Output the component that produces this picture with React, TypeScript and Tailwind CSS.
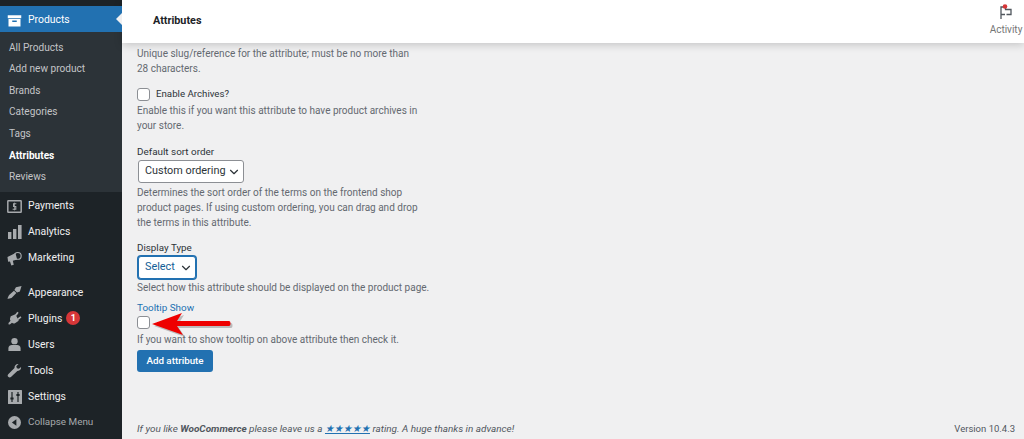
import { ChevronDown } from 'lucide-react';
import type { ReactNode } from 'react';

const subItems = ['All Products', 'Add new product', 'Brands', 'Categories', 'Tags', 'Attributes', 'Reviews'];

function ProductsIcon() {
  return (
    <svg viewBox="0 0 20 20" className="h-[15px] w-[15px] fill-white">
      <path d="M1 3h18v4H1z" />
      <path fillRule="evenodd" d="M2 8h16v10H2zM7 10v2h6v-2z" />
    </svg>
  );
}

function PaymentsIcon() {
  return (
    <svg viewBox="0 0 16 14" className="h-[13px] w-[15px]">
      <rect x="0.8" y="0.8" width="14.4" height="12.4" rx="0.5" fill="none" stroke="#a7aaad" strokeWidth="1.6" />
      <path d="M10 4H7v3h2.400v3H6" fill="none" stroke="#a7aaad" strokeWidth="1.200" />
      <path d="M8 2.800v8.400" stroke="#a7aaad" strokeWidth="0.8" />
    </svg>
  );
}

function AnalyticsIcon() {
  return (
    <svg viewBox="0 0 14 14" className="h-[14px] w-[14px] fill-[#a7aaad]">
      <rect x="0" y="7" width="3.4" height="7" />
      <rect x="5" y="4" width="3.4" height="10" />
      <rect x="10" y="0" width="3.6" height="14" />
    </svg>
  );
}

function MarketingIcon() {
  return (
    <svg viewBox="0 0 16 16" className="h-[15px] w-[15px] fill-[#a7aaad]">
      <path d="M0.5 6.500 9 2.200l1.800 6.800-4.600 1.400 1 4.200-2.600.9-1.400-4.400-2 .3z" />
      <circle cx="11.500" cy="5.200" r="3.600" fill="none" stroke="#a7aaad" strokeWidth="1.200" />
    </svg>
  );
}

function AppearanceIcon() {
  return (
    <svg viewBox="0 0 16 16" className="h-[15px] w-[15px] fill-[#a7aaad]">
      <path d="M9.500 2.500 15.500 1l-1.800 5.800-3 1.200-2.800-2.800z" />
      <path d="M7.400 6 10 8.600 5.600 13c-1.400 1.400-3.600 1.800-5.400 1.400 1.200-1 1-2.600 2.400-4z" />
    </svg>
  );
}

function PluginsIcon() {
  return (
    <svg viewBox="0 0 16 16" className="h-[15px] w-[15px] fill-[#a7aaad]">
      <path d="M4 5.500 9 3.500l3.500 7-4 2.500c-1.200.5-2.400.2-3.200-.6L3 14.500l-1.600-.4.4-1.600 2-2c-.8-1-.8-2.400-.3-3.200z" />
      <path d="M8.500 4 11 .8l1.400 1L10.200 5zM11 8l3.400-2.400 1 1.400L12.200 9.600z" />
    </svg>
  );
}

function UsersIcon() {
  return (
    <svg viewBox="0 0 16 16" className="h-[15px] w-[15px] fill-[#a7aaad]">
      <circle cx="8" cy="4.400" r="3.400" />
      <path d="M1.500 15v-3.200c0-2 2-3.300 3.600-3.300h5.800c1.600 0 3.600 1.300 3.600 3.300V15z" />
    </svg>
  );
}

function ToolsIcon() {
  return (
    <svg viewBox="0 0 16 16" className="h-[15px] w-[15px] fill-[#a7aaad]">
      <path d="M15 4.200c.4 2-1.400 4.400-4 4.200L4.200 15c-1 .9-2.200.4-2.900-.3-.7-.8-.9-1.900 0-2.800L8 5.200C7.700 2.700 10 .6 12.300 1.100L9.900 3.500l.6 2.100 2.200.6z" />
    </svg>
  );
}

function SettingsIcon() {
  return (
    <svg viewBox="0 0 14 14" className="h-[14px] w-[14px]">
      <rect width="14" height="14" rx="0.5" fill="#a7aaad" />
      <path d="M4 2v10M10 2v10" stroke="#1d2327" strokeWidth="1.200" />
      <path d="M2.400 8.500h3.200M8.400 5h3.200" stroke="#1d2327" strokeWidth="2" />
    </svg>
  );
}

function CollapseIcon() {
  return (
    <svg viewBox="0 0 14 14" className="h-[13px] w-[13px]">
      <circle cx="7" cy="7" r="7" fill="#a7aaad" />
      <path d="M9 3.500v7L4.200 7z" fill="#1d2327" />
    </svg>
  );
}

function MenuRow({ icon, label, children }: { icon: ReactNode; label: string; children?: ReactNode }) {
  return (
    <div className="flex h-[26.1px] items-center pt-[2px] text-[#f0f0f1]">
      <span className="flex w-[28px] shrink-0 justify-center pl-[1px]">{icon}</span>
      <span>{label}</span>
      {children}
    </div>
  );
}

function Sidebar() {
  return (
    <aside className="flex w-[122px] shrink-0 flex-col bg-[#1d2327] pt-[6px] text-[10.4px]">
      <div className="relative flex h-[26px] items-center bg-[#2271b1] pt-[2px] text-white">
        <span className="flex w-[28px] shrink-0 justify-center pl-[1px]">
          <ProductsIcon />
        </span>
        <span>Products</span>
        <span className="absolute right-0 top-[7px] h-0 w-0 border-y-[6px] border-r-[6px] border-y-transparent border-r-[#f0f0f1]" />
      </div>
      <div className="flex h-[160px] flex-col justify-center bg-[#2c3338] pl-[9px] text-[10.1px] text-[#c3c4c7]">
        {subItems.map((item) => (
          <div
            key={item}
            className={`flex h-[21.6px] items-center ${item === 'Attributes' ? 'font-bold text-white' : ''}`}
          >
            {item}
          </div>
        ))}
      </div>
      <MenuRow icon={<PaymentsIcon />} label="Payments" />
      <MenuRow icon={<AnalyticsIcon />} label="Analytics" />
      <MenuRow icon={<MarketingIcon />} label="Marketing" />
      <div className="h-[8px]" />
      <MenuRow icon={<AppearanceIcon />} label="Appearance" />
      <MenuRow icon={<PluginsIcon />} label="Plugins">
        <span className="ml-[4px] flex h-[14px] w-[14px] items-center justify-center rounded-full bg-[#d63638] text-[9px] font-bold text-white">
          1
        </span>
      </MenuRow>
      <MenuRow icon={<UsersIcon />} label="Users" />
      <MenuRow icon={<ToolsIcon />} label="Tools" />
      <MenuRow icon={<SettingsIcon />} label="Settings" />
      <div className="flex h-[26px] items-center pt-[2px] text-[9.9px] text-[#a7aaad]">
        <span className="flex w-[28px] shrink-0 justify-center pl-[1px]">
          <CollapseIcon />
        </span>
        <span>Collapse Menu</span>
      </div>
    </aside>
  );
}

function Checkbox() {
  return <span className="block h-[13px] w-[13px] rounded-[3px] border border-[#8c8f94] bg-white" />;
}

function Help({ children, className = '' }: { children: ReactNode; className?: string }) {
  return <p className={`whitespace-nowrap text-[10px] leading-[15px] text-[#646970] ${className}`}>{children}</p>;
}

function ArrowPointer() {
  return (
    <svg viewBox="0 0 82 26" className="absolute left-[151px] top-[311px] h-[26px] w-[82px]">
      <path d="M1 13 31 2l-5 8h52c2 0 2 5 0 5H26l6 9z" fill="#000" opacity="0.22" transform="translate(2 2)" />
      <path d="M1 13 31 2l-5 8h52c2 0 2 5 0 5H26l6 9z" fill="#ee0000" />
    </svg>
  );
}

export default function App() {
  return (
    <div
      className="relative flex h-[439px] w-[1024px] overflow-hidden bg-[#f0f0f1] text-[#2c3338]"
      style={{ fontFamily: 'Roboto, sans-serif' }}
    >
      <Sidebar />
      <main className="flex min-w-0 flex-1 flex-col">
        <header className="flex h-[43px] shrink-0 items-start justify-between bg-white shadow-[0_2px_8px_rgba(0,0,0,0.18)]">
          <h1 className="pl-[31px] pt-[13px] text-[10.8px] font-bold leading-[15px] text-[#1d2327]">Attributes</h1>
          <div className="flex w-[36px] flex-col items-center pt-[4px]">
            <svg viewBox="0 0 14 16" className="h-[16px] w-[14px]">
              <path d="M2 15V3h4.500v2.500H12v5H7.500M2 10.500h4" fill="none" stroke="#50575e" strokeWidth="1.300" />
              <circle cx="6" cy="2.500" r="2.300" fill="#d63638" />
            </svg>
            <span className="mt-[3px] text-[10px] leading-[13px] text-[#757575]">Activity</span>
          </div>
        </header>
        <div className="flex flex-1 flex-col pl-[15px] pt-[3px]">
          <Help>
            Unique slug/reference for the attribute; must be no more than
            <br />
            28 characters.
          </Help>
          <label className="mt-[10px] flex h-[15px] items-center gap-[6px] pt-[1px] text-[9.7px]">
            <Checkbox />
            Enable Archives?
          </label>
          <Help className="mt-[2px]">
            Enable this if you want this attribute to have product archives in
            <br />
            your store.
          </Help>
          <div className="mt-[11px] text-[9.9px] leading-[15px]">Default sort order</div>
          <div className="ml-[1px] mt-[1px] flex h-[23px] w-[106px] items-center justify-between whitespace-nowrap rounded-[3px] border border-[#8c8f94] bg-white pl-[6px] pr-[2px] text-[10.85px]">
            Custom ordering
            <ChevronDown size={14} strokeWidth={2} className="shrink-0 text-[#2c3338]" />
          </div>
          <Help className="mt-[2px]">
            Determines the sort order of the terms on the frontend shop
            <br />
            product pages. If using custom ordering, you can drag and drop
            <br />
            the terms in this attribute.
          </Help>
          <div className="mt-[10px] text-[9.8px] leading-[15px]">Display Type</div>
          <div className="ml-[1px] mt-[1px] flex h-[23px] w-[58px] items-center justify-between rounded-[3px] border border-[#2271b1] bg-white pl-[6px] pr-[2px] text-[10.85px] text-[#135e96] shadow-[0_0_0_1px_#2271b1]">
            Select
            <ChevronDown size={14} strokeWidth={2} className="shrink-0 text-[#2c3338]" />
          </div>
          <Help className="mt-[1px]">Select how this attribute should be displayed on the product page.</Help>
          <div className="mt-[5px] text-[9.9px] leading-[15px] text-[#2271b1]">Tooltip Show</div>
          <span className="mt-[1px]">
            <Checkbox />
          </span>
          <Help className="mt-[3px]">If you want to show tooltip on above attribute then check it.</Help>
          <button
            type="button"
            className="mt-[3px] h-[22px] w-[76px] rounded-[3px] bg-[#2271b1] text-[9.8px] font-medium text-white"
          >
            Add attribute
          </button>
          <div className="mt-auto flex h-[20px] items-center justify-between pr-[9px] text-[9.95px] text-[#50575e]">
            <span className="italic">
              If you like <b>WooCommerce</b> please leave us a{' '}
              <span className="text-[#2271b1] underline">★★★★★</span> rating. A huge thanks in advance!
            </span>
            <span className="text-[9.5px]">Version 10.4.3</span>
          </div>
        </div>
      </main>
      <ArrowPointer />
    </div>
  );
}
